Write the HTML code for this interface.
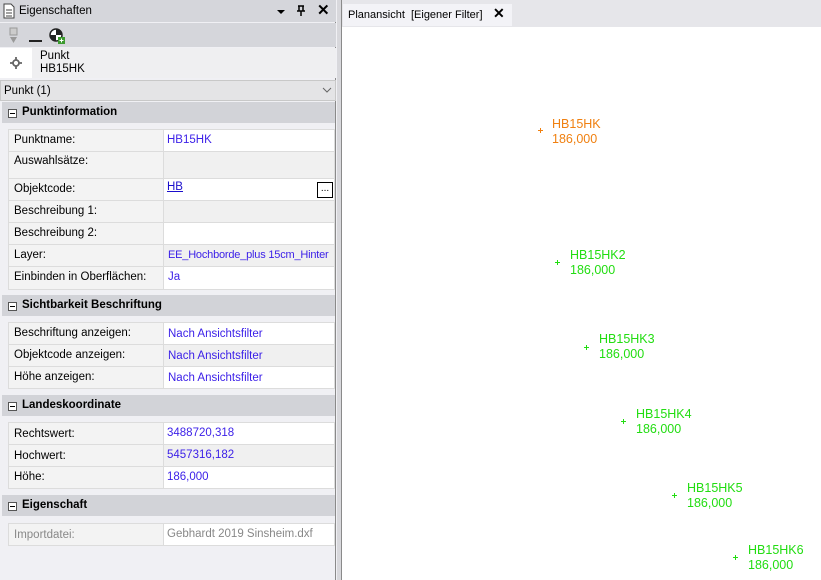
<!DOCTYPE html><html><head><style>
*{margin:0;padding:0;box-sizing:border-box}
body{width:821px;height:580px;position:relative;background:#f0f0f4;font-family:"Liberation Sans",sans-serif;font-size:11.5px;color:#000;overflow:hidden}
.a{position:absolute}
.sec{position:absolute;left:2px;width:333px;height:21px;background:#d2d3d8;font-weight:bold;font-size:11.5px}
.sec .t{position:absolute;left:20px;top:4px}
.sec .m{position:absolute;left:6px;top:7px;width:9px;height:9px;border:1px solid #555;background:#fff}
.sec .m:after{content:"";position:absolute;left:1px;top:3px;width:5px;height:1px;background:#000}
.r{position:absolute;left:8px;width:327px;border:1px solid #dcdcdc;border-top:none}
.r .l{position:absolute;left:0;top:0;bottom:0;width:155px;background:#f3f3f3;border-right:1px solid #dcdcdc;padding:4px 0 0 5px}
.r .v{position:absolute;left:155px;right:0;top:0;bottom:0;padding:4px 0 0 3px;color:#3a1ee8;white-space:nowrap;overflow:hidden}
.w{background:#fff}.g{background:#f0f0f0}
.lab{position:absolute;font-size:12.5px}
.p{position:absolute;width:5px;height:5px}
.p:before{content:"";position:absolute;left:2px;top:0;width:1px;height:5px;background:currentColor}
.p:after{content:"";position:absolute;left:0;top:2px;width:5px;height:1px;background:currentColor}
</style></head><body>
<div class="a" style="left:0;top:0;width:336px;height:580px;background:#f0f0f4;border-right:1px solid #8a8a8a"></div>
<div class="a" style="left:0;top:0;width:336px;height:22px;background:#d5d6db"></div>
<svg class="a" style="left:3px;top:3px" width="12" height="16"><path d="M1 1h7l3 3v11H1z" fill="#fff" stroke="#444"/><path d="M3 7h6M3 10h6M3 13h6" stroke="#444"/></svg>
<div class="a" style="left:19px;top:5px">Eigenschaften</div>
<div class="a" style="left:277px;top:10px;width:0;height:0;border-left:4px solid transparent;border-right:4px solid transparent;border-top:4px solid #000"></div>
<svg class="a" style="left:296px;top:5px" width="10" height="12"><path d="M2 1h6M3 1v5M7 1v5M1 6h8M5 6v5" stroke="#000" stroke-width="1.5" fill="none"/></svg>
<div class="a" style="left:317px;top:1px;font-weight:bold;font-size:15px">✕</div>
<div class="a" style="left:0;top:23px;width:336px;height:24px;background:#d5d6db"></div>
<svg class="a" style="left:8px;top:27px" width="12" height="18"><rect x="2" y="1" width="7" height="7" fill="#ccc" stroke="#999"/><path d="M2 10h7l-3.5 6z" fill="#999"/></svg>
<div class="a" style="left:29px;top:40px;width:13px;height:2px;background:#222"></div>
<svg class="a" style="left:49px;top:28px" width="16" height="16"><circle cx="7" cy="7" r="6" fill="#fff" stroke="#222" stroke-width="1.5"/><path d="M7 1a6 6 0 0 1 6 6H7zM7 7v6a6 6 0 0 1-6-6z" fill="#222"/><rect x="9" y="9" width="7" height="7" fill="#3b9a2e"/><path d="M12.5 10.5v4M10.5 12.5h4" stroke="#fff"/></svg>
<div class="a" style="left:0;top:48px;width:32px;height:30px;background:#fff"></div>
<div class="a" style="left:32px;top:48px;width:304px;height:30px;background:#efeff1"></div>
<svg class="a" style="left:10px;top:57px" width="12" height="12"><circle cx="6" cy="6" r="3" fill="none" stroke="#666" stroke-width="1.8"/><path d="M6 0v2.5M6 9.5v2.5M0 6h2.5M9.5 6h2.5" stroke="#666" stroke-width="1.8"/></svg>
<div class="a" style="left:40px;top:50px;line-height:13px">Punkt<br>HB15HK</div>
<div class="a" style="left:0;top:80px;width:336px;height:21px;background:#e4e4e6;border:1px solid #c8c8c8"></div>
<div class="a" style="left:4px;top:85px">Punkt (1)</div>
<svg class="a" style="left:322px;top:87px" width="10" height="6"><path d="M1 1l4 4 4-4" stroke="#666" fill="none"/></svg>

<div class="sec" style="top:102px"><div class="m"></div><div class="t">Punktinformation</div></div>
<div class="r" style="top:129px;height:23px;border-top:1px solid #dcdcdc"><div class="l">Punktname:</div><div class="v w">HB15HK</div></div>
<div class="r" style="top:152px;height:27px"><div class="l" style="padding-top:3px">Auswahlsätze:</div><div class="v g"></div></div>
<div class="r" style="top:179px;height:22px"><div class="l">Objektcode:</div><div class="v w" style="padding-top:2px"><span style="color:#1a0dcc;text-decoration:underline">HB</span><div class="a" style="right:1px;top:3px;width:16px;height:16px;border:1px solid #000;background:#fff;color:#000;font-size:10px;line-height:12px;text-align:center">...</div></div></div>
<div class="r" style="top:201px;height:22px"><div class="l">Beschreibung 1:</div><div class="v g"></div></div>
<div class="r" style="top:223px;height:22px"><div class="l">Beschreibung 2:</div><div class="v w"></div></div>
<div class="r" style="top:245px;height:22px"><div class="l">Layer:</div><div class="v g" style="padding-left:4px;font-size:11px;letter-spacing:-0.2px">EE_Hochborde_plus 15cm_Hinter</div></div>
<div class="r" style="top:267px;height:23px"><div class="l">Einbinden in Oberflächen:</div><div class="v w" style="padding-left:4px">Ja</div></div>

<div class="sec" style="top:295px"><div class="m"></div><div class="t">Sichtbarkeit Beschriftung</div></div>
<div class="r" style="top:322px;height:23px;border-top:1px solid #dcdcdc"><div class="l">Beschriftung anzeigen:</div><div class="v w" style="padding-left:4px;padding-top:5px">Nach Ansichtsfilter</div></div>
<div class="r" style="top:345px;height:22px"><div class="l">Objektcode anzeigen:</div><div class="v g" style="padding-left:4px;padding-top:5px">Nach Ansichtsfilter</div></div>
<div class="r" style="top:367px;height:22px"><div class="l">Höhe anzeigen:</div><div class="v w" style="padding-left:4px;padding-top:5px">Nach Ansichtsfilter</div></div>

<div class="sec" style="top:395px"><div class="m"></div><div class="t">Landeskoordinate</div></div>
<div class="r" style="top:422px;height:23px;border-top:1px solid #dcdcdc"><div class="l" style="padding-top:5px">Rechtswert:</div><div class="v w">3488720,318</div></div>
<div class="r" style="top:445px;height:22px"><div class="l" style="padding-top:5px">Hochwert:</div><div class="v g">5457316,182</div></div>
<div class="r" style="top:467px;height:22px"><div class="l">Höhe:</div><div class="v w">186,000</div></div>

<div class="sec" style="top:495px"><div class="m"></div><div class="t">Eigenschaft</div></div>
<div class="r" style="top:523px;height:23px;border-top:1px solid #dcdcdc"><div class="l" style="color:#888;padding-top:5px">Importdatei:</div><div class="v w" style="color:#888">Gebhardt 2019 Sinsheim.dxf</div></div>

<div class="a" style="left:337px;top:0;width:4px;height:580px;background:#d8d8dc"></div>
<div class="a" style="left:341px;top:0;width:1px;height:580px;background:#8a8a8a"></div>
<div class="a" style="left:342px;top:0;width:479px;height:27px;background:#e6e6ea"></div>
<div class="a" style="left:343px;top:4px;width:169px;height:22px;background:#f3f3f7"></div>
<div class="a" style="left:348px;top:9px;font-size:11px">Planansicht&nbsp; [Eigener Filter]</div>
<div class="a" style="left:493px;top:5px;font-weight:bold;font-size:14px">✕</div>
<div class="a" style="left:342px;top:27px;width:479px;height:553px;background:#fff"></div>

<div class="p" style="left:538px;top:128px;color:#f08010"></div>
<div class="lab" style="left:552px;top:117px;color:#f08010;line-height:15px">HB15HK<br>186,000</div>
<div class="p" style="left:555px;top:260px;color:#22dd11"></div>
<div class="lab" style="left:570px;top:248px;color:#22dd11;line-height:15px">HB15HK2<br>186,000</div>
<div class="p" style="left:584px;top:345px;color:#22dd11"></div>
<div class="lab" style="left:599px;top:332px;color:#22dd11;line-height:15px">HB15HK3<br>186,000</div>
<div class="p" style="left:621px;top:419px;color:#22dd11"></div>
<div class="lab" style="left:636px;top:407px;color:#22dd11;line-height:15px">HB15HK4<br>186,000</div>
<div class="p" style="left:672px;top:493px;color:#22dd11"></div>
<div class="lab" style="left:687px;top:481px;color:#22dd11;line-height:15px">HB15HK5<br>186,000</div>
<div class="p" style="left:733px;top:555px;color:#22dd11"></div>
<div class="lab" style="left:748px;top:543px;color:#22dd11;line-height:15px">HB15HK6<br>186,000</div>
</body></html>
